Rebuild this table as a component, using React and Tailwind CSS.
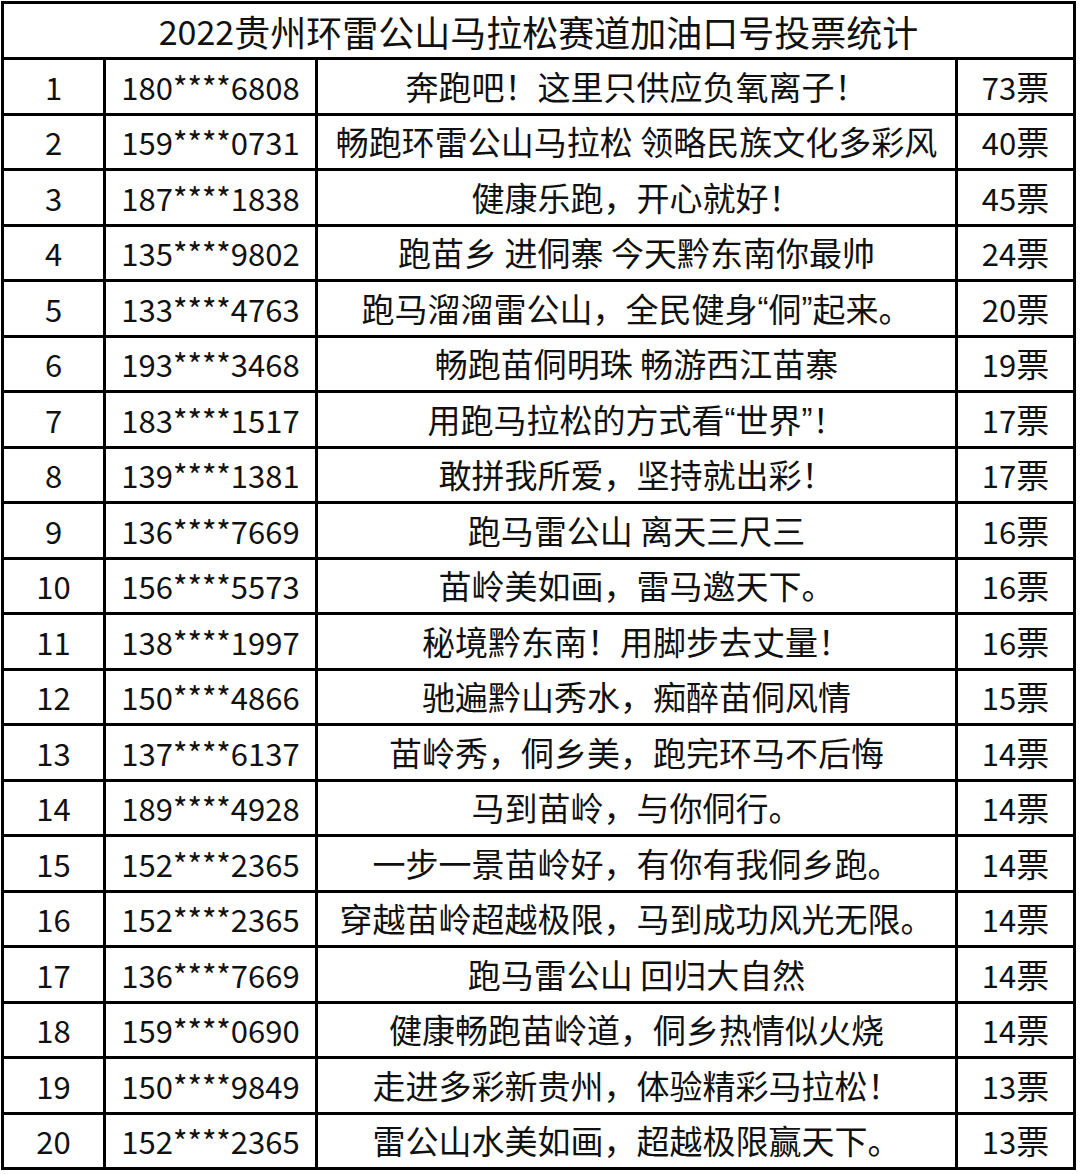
import React from "react";

const rows = [
    ["1", "180****6808", "奔跑吧！这里只供应负氧离子！", "73"],
    ["2", "159****0731", "畅跑环雷公山马拉松 领略民族文化多彩风", "40"],
    ["3", "187****1838", "健康乐跑，开心就好！", "45"],
    ["4", "135****9802", "跑苗乡 进侗寨 今天黔东南你最帅", "24"],
    ["5", "133****4763", "跑马溜溜雷公山，全民健身“侗”起来。", "20"],
    ["6", "193****3468", "畅跑苗侗明珠 畅游西江苗寨", "19"],
    ["7", "183****1517", "用跑马拉松的方式看“世界”！", "17"],
    ["8", "139****1381", "敢拼我所爱，坚持就出彩！", "17"],
    ["9", "136****7669", "跑马雷公山 离天三尺三", "16"],
    ["10", "156****5573", "苗岭美如画，雷马邀天下。", "16"],
    ["11", "138****1997", "秘境黔东南！用脚步去丈量！", "16"],
    ["12", "150****4866", "驰遍黔山秀水，痴醉苗侗风情", "15"],
    ["13", "137****6137", "苗岭秀，侗乡美，跑完环马不后悔", "14"],
    ["14", "189****4928", "马到苗岭，与你侗行。", "14"],
    ["15", "152****2365", "一步一景苗岭好，有你有我侗乡跑。", "14"],
    ["16", "152****2365", "穿越苗岭超越极限，马到成功风光无限。", "14"],
    ["17", "136****7669", "跑马雷公山 回归大自然", "14"],
    ["18", "159****0690", "健康畅跑苗岭道，侗乡热情似火烧", "14"],
    ["19", "150****9849", "走进多彩新贵州，体验精彩马拉松！", "13"],
    ["20", "152****2365", "雷公山水美如画，超越极限赢天下。", "13"],
];

const cell = "bg-white flex items-center justify-center whitespace-nowrap";

// narrow western quotes, as in the picture
const Slogan = ({ text }) =>
    text.split(/([“”])/).map((part, i) =>
        part === "“" || part === "”" ? (
            <span key={i} className="font-['Liberation_Sans',sans-serif]">
                {part}
            </span>
        ) : (
            <span key={i}>{part}</span>
        )
    );

export default function App() {
    return (
        <div className="min-h-screen bg-white pt-[1px] pl-[1px] text-[#111] font-['Noto_Sans_CJK_SC','Noto_Sans',sans-serif] text-[33px] leading-none">
            <div className="grid w-[1075px] bg-black p-[3px] gap-[3px] grid-cols-[99px_209px_637px_115px] grid-rows-[53px_repeat(20,52.5px)]">
                <div className={`${cell} col-span-4 text-[36px]`}>
                    <span className="text-[34px]">2022</span>
                    贵州环雷公山马拉松赛道加油口号投票统计
                </div>
                {rows.map((r) => (
                    <React.Fragment key={r[0]}>
                        <div className={`${cell} text-[31px]`}>{r[0]}</div>
                        <div className={`${cell} text-[31px]`}>{r[1]}</div>
                        <div className={cell}>
                            <Slogan text={r[2]} />
                        </div>
                        <div className={cell}>
                            <span className="text-[31px]">{r[3]}</span>票
                        </div>
                    </React.Fragment>
                ))}
            </div>
        </div>
    );
}
